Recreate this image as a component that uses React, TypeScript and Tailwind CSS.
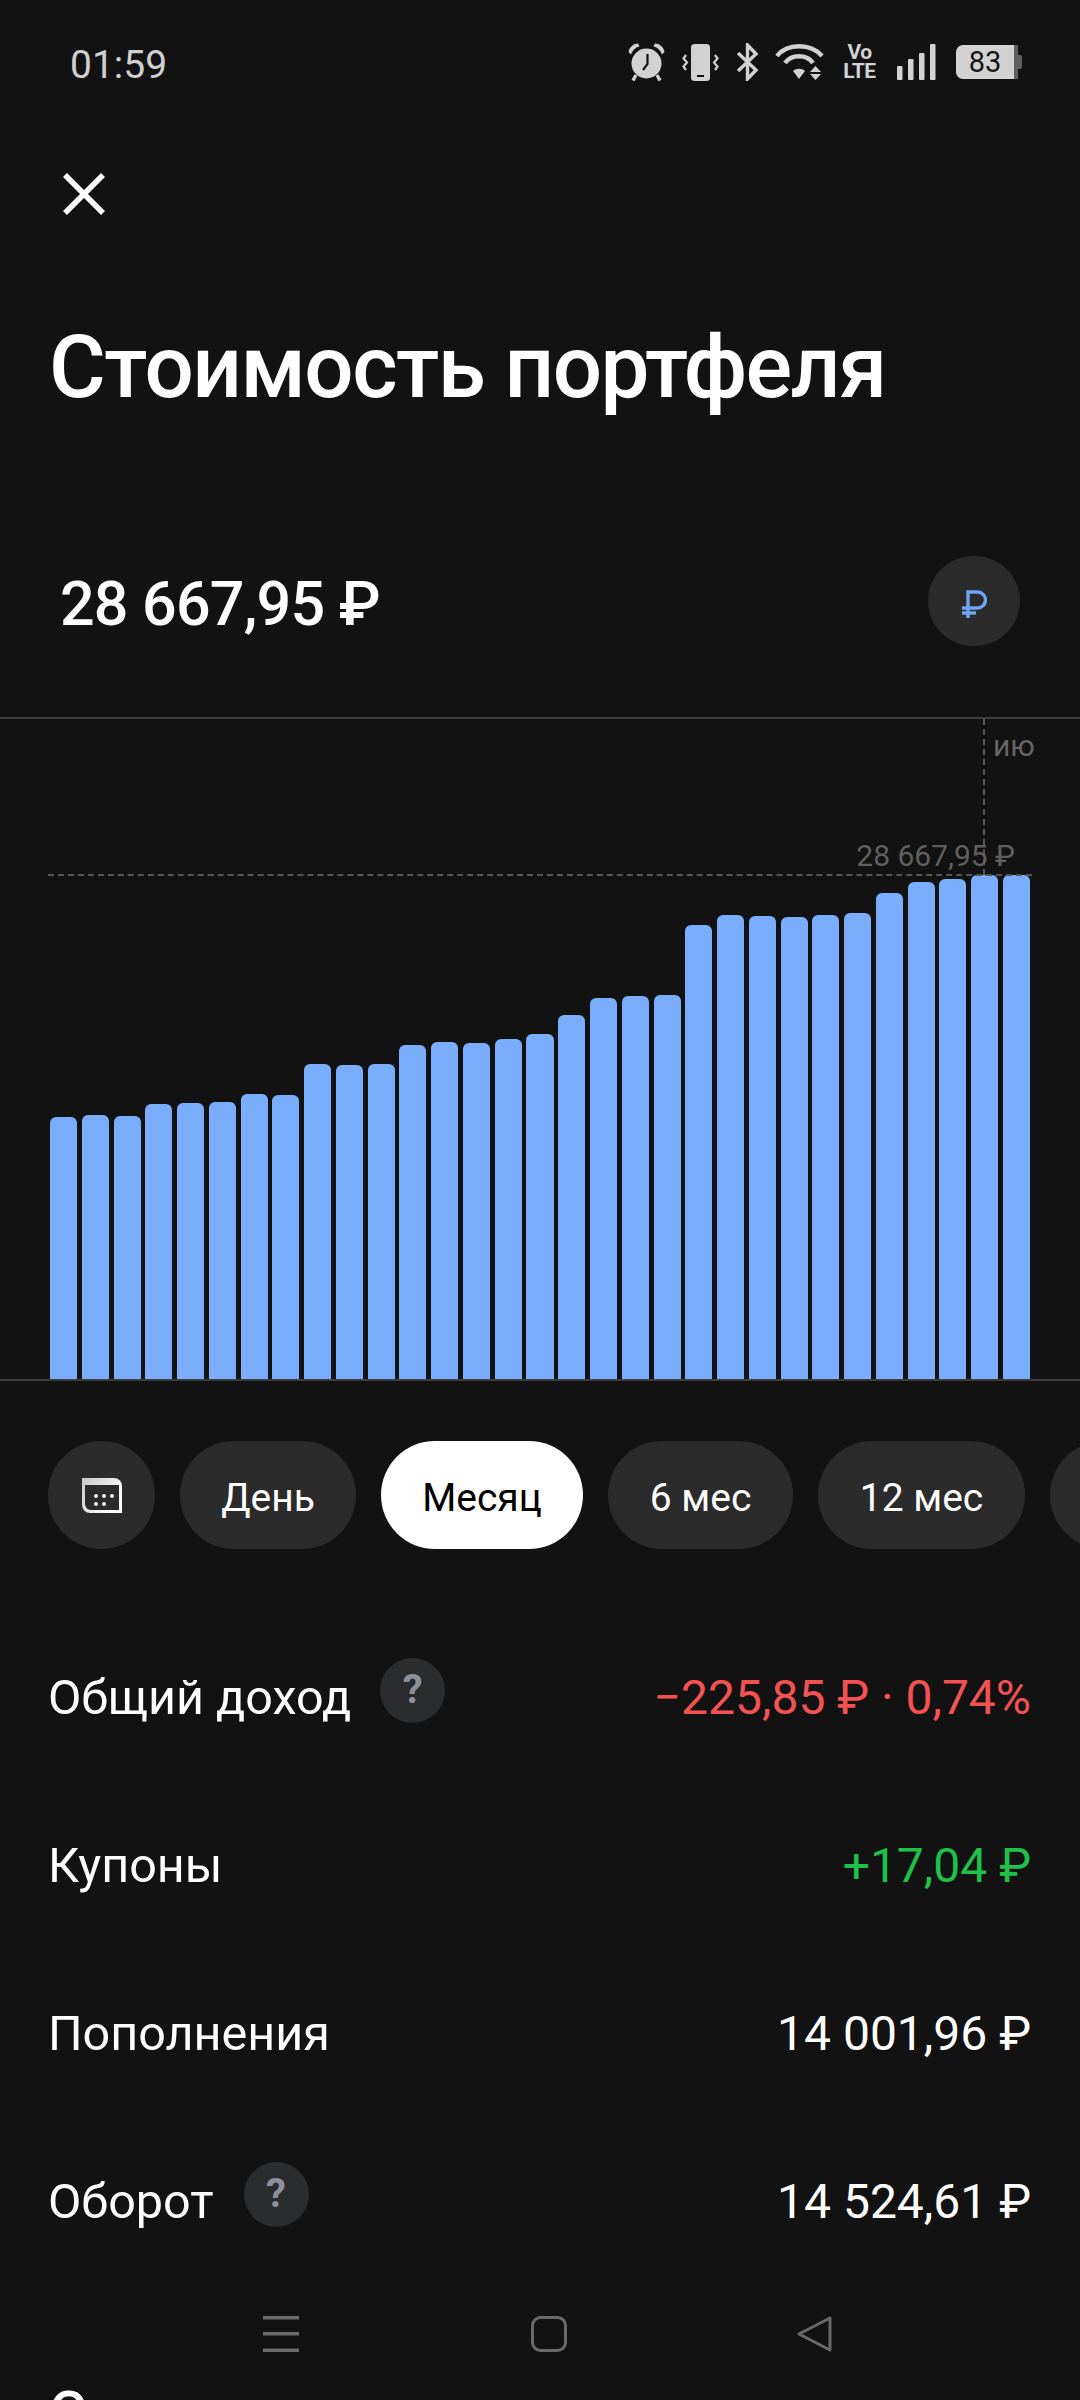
import React from "react";

const tops = [1117,1115,1116,1103.5,1102.5,1102,1094,1094.5,1064,1064.5,1064,1045,1042,1042.5,1039,1034,1015,998,996,995,925,915,916,917,915.3,912.7,893,882,879,875,875];

function Alarm() {
  return (
    <svg width="37" height="38" viewBox="0 0 37 38" fill="none">
      <path d="M0.5 9 C1.5 3.5 6 0.5 10 0.5 L11.5 3.5 C7 4.5 4.5 7.5 3 11.5 Z" fill="#d2d2d2" />
      <path d="M36.5 9 C35.5 3.5 31 0.5 27 0.5 L25.5 3.5 C30 4.5 32.5 7.5 34 11.5 Z" fill="#d2d2d2" />
      <circle cx="18.5" cy="20.5" r="15" fill="#d2d2d2" />
      <path d="M8 32 L5 37.5 M29 32 L32 37.5" stroke="#d2d2d2" strokeWidth="3.4" />
      <path d="M19.5 11 V21 L15 27" stroke="#121212" strokeWidth="2.2" fill="none" />
    </svg>
  );
}
function PhoneVibrate() {
  return (
    <svg width="37" height="37" viewBox="0 0 37 37" fill="none">
      <rect x="9" y="0" width="19" height="37" rx="3.5" fill="#d2d2d2" />
      <rect x="15" y="31" width="7" height="2" fill="#121212" />
      <path d="M4 11 L1.5 14.5 L5 18.5 L1.5 22.5 L4 26" stroke="#d2d2d2" strokeWidth="2.2" />
      <path d="M33 11 L35.5 14.5 L32 18.5 L35.5 22.5 L33 26" stroke="#d2d2d2" strokeWidth="2.2" />
    </svg>
  );
}
function Bluetooth() {
  return (
    <svg width="23" height="38" viewBox="0 0 23 38" fill="none">
      <path d="M2 10 L20 27 L11.5 36 V2 L20 11 L2 28" stroke="#d2d2d2" strokeWidth="3.4" />
    </svg>
  );
}
function Wifi() {
  return (
    <svg width="50" height="38" viewBox="0 0 50 38" fill="none">
      <path d="M2 13 C12 0 36 0 47 13" stroke="#d2d2d2" strokeWidth="4.4" />
      <path d="M10 20 C16 11 32 11 38 20" stroke="#d2d2d2" strokeWidth="4.4" />
      <path d="M18 28 C21 25 27 25 30 28 L24 36 Z" fill="#d2d2d2" />
      <path d="M40.5 23 L46 29 H35 Z M35 31 H46 L40.5 37 Z" fill="#d2d2d2" />
    </svg>
  );
}
function Signal() {
  return (
    <svg width="39" height="36" viewBox="0 0 39 36" fill="#d2d2d2">
      <rect x="0" y="22" width="5.5" height="14" rx="1" />
      <rect x="11" y="15" width="5.5" height="21" rx="1" />
      <rect x="22" y="9" width="5.5" height="27" rx="1" />
      <rect x="33" y="0" width="5.5" height="36" rx="1" />
    </svg>
  );
}
function CloseIcon() {
  return (
    <svg width="42" height="42" viewBox="0 0 42 42" fill="none" stroke="#fff" strokeWidth="5.5">
      <path d="M2 2 L40 40 M40 2 L2 40" />
    </svg>
  );
}
function RubleIcon() {
  return (
    <svg className="mt-[6px]" width="26" height="28" viewBox="0 0 26 28" fill="none" stroke="#6ea6f5" strokeWidth="3.4">
      <path d="M7 28 V2 H16.5 A8 8 0 0 1 16.5 18 H1" />
      <path d="M1 23 H15" />
    </svg>
  );
}
function CalendarIcon() {
  return (
    <svg width="40" height="35" viewBox="0 0 40 35">
      <defs>
        <linearGradient id="calg" x1="0" y1="0" x2="1" y2="0.6">
          <stop offset="0" stopColor="#c9c9c9" />
          <stop offset="1" stopColor="#ffffff" />
        </linearGradient>
      </defs>
      <path d="M0 0 H32 A8 8 0 0 1 40 8 V35 H8 A8 8 0 0 1 0 27 Z" fill="url(#calg)" />
      <path d="M3 7 H37 V32 H9 A6 6 0 0 1 3 26 Z" fill="#2b2b2b" />
      <g fill="#f0f0f0">
        <circle cx="14" cy="18" r="2" /><circle cx="22" cy="18" r="2" /><circle cx="30" cy="18" r="2" />
        <circle cx="14" cy="26" r="2" /><circle cx="22" cy="26" r="2" />
      </g>
    </svg>
  );
}

function Help() {
  return (
    <span className="flex h-[65px] w-[65px] items-center justify-center rounded-full bg-[#2b2c2e] text-[40px] font-bold leading-none text-[#8b909a]">?</span>
  );
}

function Row({ label, value, color, help, gap }: { label: string; value: string; color: string; help?: boolean; gap?: string }) {
  return (
    <div className="flex h-[168px] items-center justify-between pl-[48px] pr-[49px] text-[48px] leading-[60px]">
      <div className="flex items-center">
        <span className="mt-[4px] text-[48.5px] text-white">{label}</span>
        {help && <span className={`-mt-[12px] ${gap}`}><Help /></span>}
      </div>
      <span className={`mt-[3px] ${color}`}>{value}</span>
    </div>
  );
}

function Pill({ label, active, width }: { label: string; active?: boolean; width: string }) {
  return (
    <span className={`flex h-[108px] shrink-0 items-center justify-center rounded-full pt-[6px] ${width} ${active ? "bg-white text-black" : "bg-[#2b2b2b]"}`}>{label}</span>
  );
}

export default function App() {
  return (
    <div className="relative h-[2400px] w-[1080px] overflow-hidden bg-[#121212] font-['Roboto',sans-serif] text-white">
      <div className="flex h-[130px] items-start justify-between pl-[70px] pr-[58px]">
        <span className="mt-[43px] text-[39px] leading-[44px] text-[#cfcfcf]">01:59</span>
        <div className="mt-[43px] flex items-center">
          <Alarm />
          <span className="ml-[17px]"><PhoneVibrate /></span>
          <span className="ml-[17px]"><Bluetooth /></span>
          <span className="ml-[16px]"><Wifi /></span>
          <span className="ml-[18px] flex w-[33px] flex-col items-center text-[21px] font-bold leading-[19px] tracking-tight text-[#d2d2d2]">
            <span>Vo</span>
            <span>LTE</span>
          </span>
          <span className="ml-[21px]"><Signal /></span>
          <div className="ml-[20px] flex h-[34px] w-[66px] items-center">
            <div className="flex h-[34px] w-[58px] items-center justify-center rounded-l-[7px] bg-[#d2d2d2] text-[29px] leading-none text-[#151515]">83</div>
            <div className="h-[34px] w-[4px] bg-[#5f5f5f]" />
            <div className="h-[14px] w-[4px] rounded-r-[2px] bg-[#5f5f5f]" />
          </div>
        </div>
      </div>

      <div className="ml-[63px] mt-[43px] h-[42px] w-[42px]"><CloseIcon /></div>

      <h1 className="ml-[49px] mt-[102px] h-[100px] text-[87px] font-medium leading-[100px] tracking-[-1.5px]">Стоимость портфеля</h1>

      <div className="ml-[60px] mr-[60px] mt-[139px] flex h-[90px] items-center justify-between">
        <span className="mt-[6px] text-[61px] font-medium leading-[70px] tracking-[-0.8px]">28 667,95 ₽</span>
        <span className="flex h-[90px] w-[92px] items-center justify-center rounded-full bg-[#2b2b2b]">
          <RubleIcon />
        </span>
      </div>

      <div className="relative mt-[71px] h-[664px] border-y-2 border-[#3d3d3d]">
        <div className="flex h-[660px] items-end gap-[4.73px] px-[50px]">
          {tops.map((t, i) => (
            <div key={i} className="flex-1 rounded-t-[6px] bg-[#7aaefc]" style={{ height: 1379 - t }} />
          ))}
        </div>
        <div className="absolute left-[983px] top-0 h-[156px] border-l-2 border-dashed border-[#555555]" />
        <div className="absolute left-[48px] right-[48px] top-[155px] border-t-2 border-dashed border-[#555555]" />
        <span className="absolute left-[993px] top-[10px] text-[30px] leading-[34px] text-[#666666]">ию</span>
        <span className="absolute right-[65px] top-[119px] text-[30px] leading-[36px] text-[#5f5f5f]">28 667,95 ₽</span>
      </div>

      <div className="mt-[60px] flex h-[108px] gap-[25px] overflow-hidden pl-[48px] text-[39px]">
        <span className="flex h-[108px] w-[107px] shrink-0 items-center justify-center rounded-full bg-[#2b2b2b]"><CalendarIcon /></span>
        <Pill label="День" width="w-[176px]" />
        <Pill label="Месяц" width="w-[202px]" active />
        <Pill label="6 мес" width="w-[185px]" />
        <Pill label="12 мес" width="w-[207px]" />
        <Pill label="Всё" width="w-[150px]" />
      </div>

      <div className="mt-[63px]">
        <Row label="Общий доход" value="−225,85 ₽ · 0,74%" color="text-[#f25252]" help gap="ml-[29px]" />
        <Row label="Купоны" value="+17,04 ₽" color="text-[#1fc14a]" />
        <Row label="Пополнения" value="14 001,96 ₽" color="text-white" />
        <Row label="Оборот" value="14 524,61 ₽" color="text-white" help gap="ml-[30px]" />
      </div>

      <h2 className="ml-[49px] mt-[93px] text-[58px] font-medium leading-[70px]">Структура</h2>

      <div className="absolute bottom-[48px] left-0 right-0 h-[36px]">
        <svg className="absolute left-[263px] top-0" width="36" height="36" viewBox="0 0 36 36" fill="#6a6a6a">
          <rect x="0" y="0" width="36" height="3.5" />
          <rect x="0" y="16" width="36" height="3.5" />
          <rect x="0" y="32.5" width="36" height="3.5" />
        </svg>
        <svg className="absolute left-[531px] top-0" width="36" height="36" viewBox="0 0 36 36" fill="none" stroke="#6a6a6a" strokeWidth="3">
          <rect x="1.5" y="1.5" width="33" height="33" rx="8" />
        </svg>
        <svg className="absolute left-[797px] top-0" width="36" height="36" viewBox="0 0 36 36" fill="none" stroke="#6a6a6a" strokeWidth="3" strokeLinejoin="round">
          <path d="M33 2 V34 L2 18 Z" />
        </svg>
      </div>
    </div>
  );
}
